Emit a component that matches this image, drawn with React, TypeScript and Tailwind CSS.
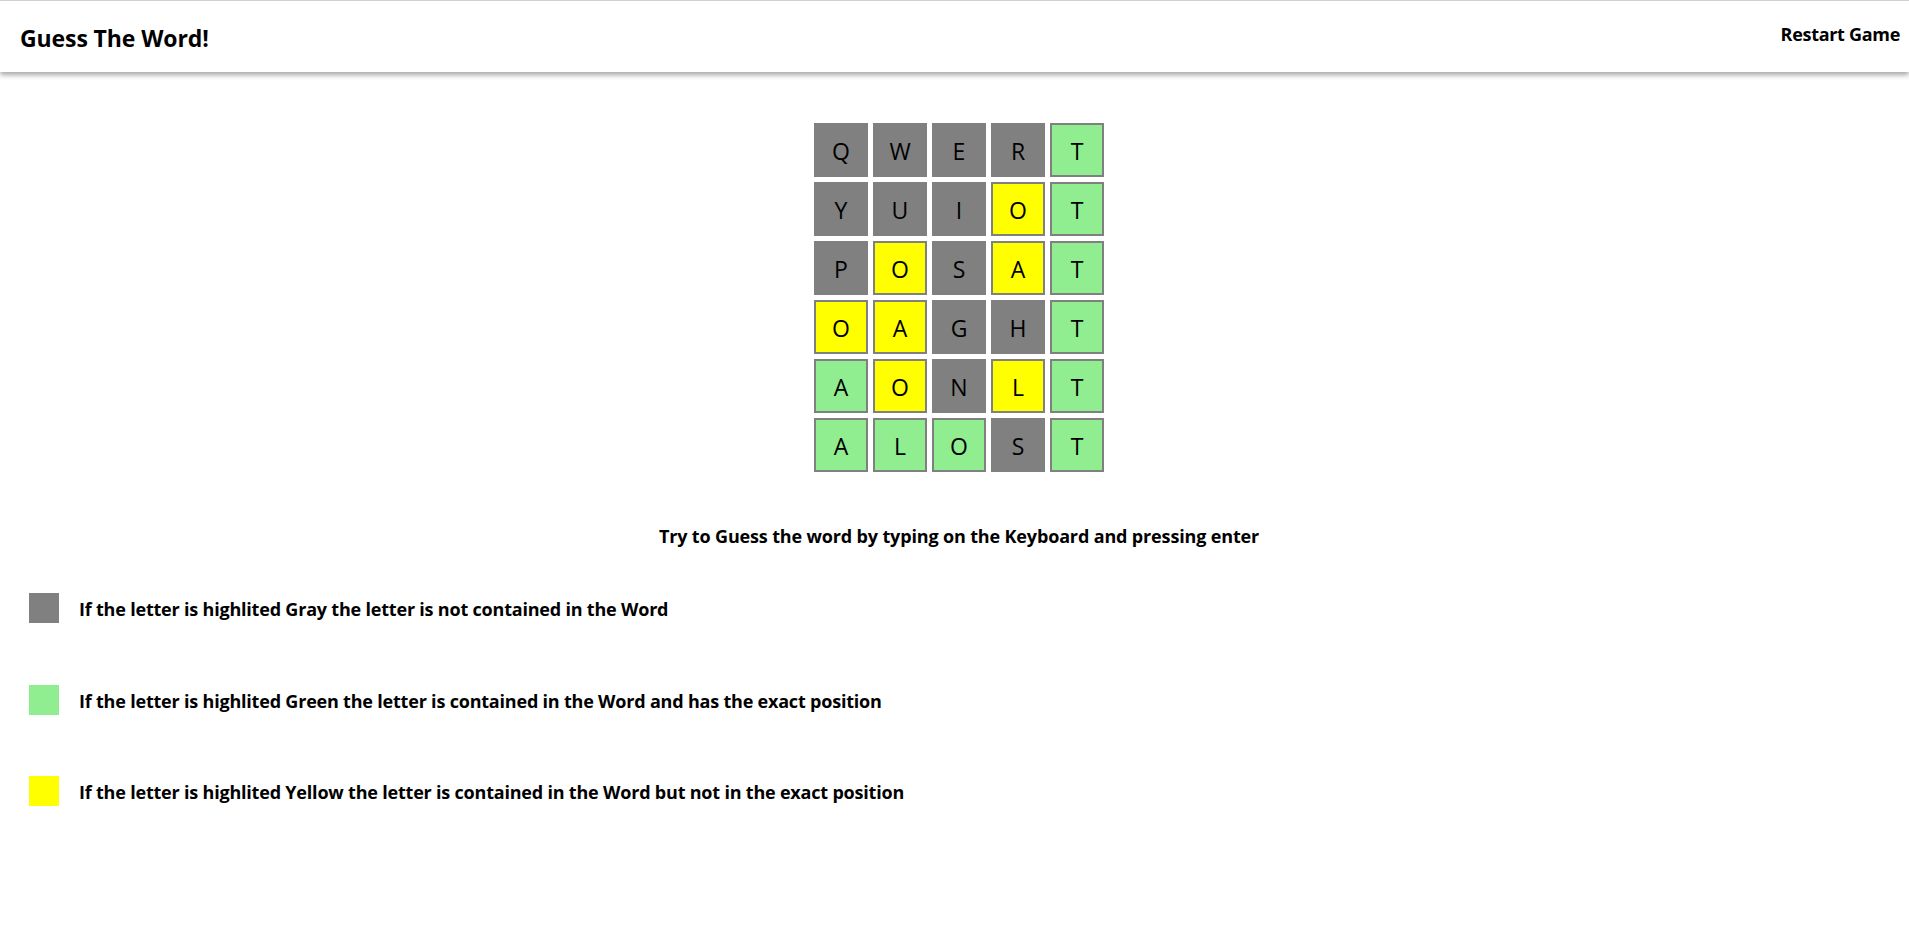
const GRAY = "bg-[#808080]";
const GREEN = "bg-[#90ee90]";
const YELLOW = "bg-[#ffff00]";

type Tile = { letter: string; color: string };

const g = (letter: string): Tile => ({ letter, color: GRAY });
const gr = (letter: string): Tile => ({ letter, color: GREEN });
const y = (letter: string): Tile => ({ letter, color: YELLOW });

const board: Tile[][] = [
  [g("Q"), g("W"), g("E"), g("R"), gr("T")],
  [g("Y"), g("U"), g("I"), y("O"), gr("T")],
  [g("P"), y("O"), g("S"), y("A"), gr("T")],
  [y("O"), y("A"), g("G"), g("H"), gr("T")],
  [gr("A"), y("O"), g("N"), y("L"), gr("T")],
  [gr("A"), gr("L"), gr("O"), g("S"), gr("T")],
];

const legend = [
  {
    color: GRAY,
    text: "If the letter is highlited Gray the letter is not contained in the Word",
  },
  {
    color: GREEN,
    text: "If the letter is highlited Green the letter is contained in the Word and has the exact position",
  },
  {
    color: YELLOW,
    text: "If the letter is highlited Yellow the letter is contained in the Word but not in the exact position",
  },
];

function Header() {
  return (
    <header className="relative z-10 flex h-[72px] items-center justify-between border-t border-[#d0d0d0] bg-white pl-5 pr-[9px] shadow-[0_3px_5px_rgba(0,0,0,0.35)]">
      <h2 className="pt-[4px] text-[23px] font-bold leading-none tracking-[-0.1px] text-black">
        Guess The Word!
      </h2>
      <button className="pb-[5px] text-[18px] font-bold leading-none tracking-[-0.3px] text-black">
        Restart Game
      </button>
    </header>
  );
}

function Board() {
  return (
    <div className="ml-[9px] mt-[51px] flex flex-col gap-[5px]">
      {board.map((row, i) => (
        <div key={i} className="flex gap-[5px]">
          {row.map((tile, j) => (
            <div
              key={j}
              className={`flex h-[54px] w-[54px] items-center justify-center border-2 border-[#808080] pt-[2px] text-[23px] leading-none text-black ${tile.color}`}
            >
              {tile.letter}
            </div>
          ))}
        </div>
      ))}
    </div>
  );
}

export default function App() {
  return (
    <div className="min-h-[935px] bg-white font-['Open_Sans',sans-serif] text-black">
      <Header />
      <main className="flex flex-col items-center">
        <Board />
        <h3 className="ml-[9px] mt-[55px] text-[18px] font-bold leading-none tracking-[-0.15px]">
          Try to Guess the word by typing on the Keyboard and pressing enter
        </h3>
      </main>
      <div className="mt-[48px] flex flex-col gap-[61.5px] pl-[29px]">
        {legend.map((item) => (
          <div key={item.text} className="flex h-[30px] items-center gap-5">
            <div className={`h-[30px] w-[30px] shrink-0 ${item.color}`} />
            <h3 className="pt-[2px] text-[18px] font-bold leading-none tracking-[-0.2px]">
              {item.text}
            </h3>
          </div>
        ))}
      </div>
    </div>
  );
}
